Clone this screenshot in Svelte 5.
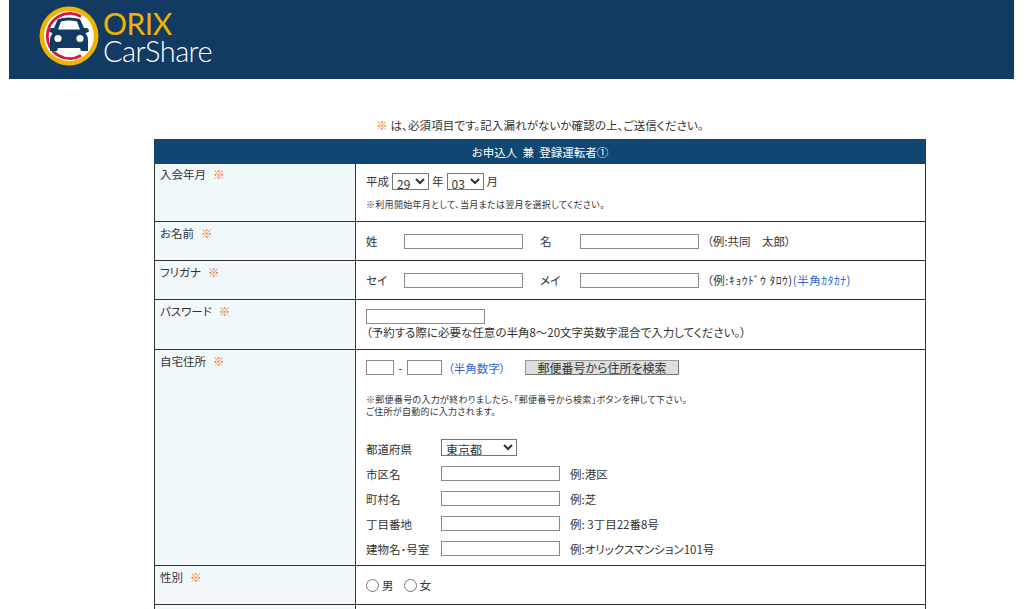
<script>
  const addressRows = [
    { label: '市区名', example: '例:港区' },
    { label: '町村名', example: '例:芝' },
    { label: '丁目番地', example: '例: 3丁目22番8号' },
    { label: '建物名･号室', example: '例:オリックスマンション101号' }
  ];
</script>

<div class="page">
  <header class="masthead">
    <svg class="mark" viewBox="0 0 60 60" width="60" height="60" aria-hidden="true">
      <circle cx="30" cy="30" r="29.5" fill="#f2b300" />
      <circle cx="30" cy="30" r="25" fill="#fff" />
      <path d="M42 10.5 A22.5 22.5 0 1 0 42 49.5" fill="none" stroke="#d8173c" stroke-width="2.8" />
      <path d="M19 13 Q30 10 41 13 L45 22 L48 22 Q50.5 23 49.5 26 L46.5 27 Q49 30 49 35 L49 45 L42 45 L41 42 L19 42 L18 45 L11 45 L11 35 Q11 30 13.5 27 L10.5 26 Q9.5 23 12 22 L15 22 Z" fill="#123a63" />
      <path d="M22 15.5 Q30 13.5 38 15.5 L41 23.5 L19 23.5 Z" fill="#fff" />
      <circle cx="19" cy="32.5" r="3.6" fill="#fff" />
      <circle cx="41" cy="32.5" r="3.6" fill="#fff" />
    </svg>
    <div class="wordmark">
      <span class="orix">ORIX</span>
      <span class="carshare">CarShare</span>
    </div>
  </header>

  <main class="content">
    <p class="notice"><span class="req">※</span> は、必須項目です。記入漏れがないか確認の上、ご送信ください。</p>

    <table class="form">
      <colgroup><col class="c1" /><col class="c2" /></colgroup>
      <thead>
        <tr><th colspan="2">お申込人 &nbsp;兼 &nbsp;登録運転者①</th></tr>
      </thead>
      <tbody>
        <tr class="r-date">
          <td class="key key-top">入会年月<span class="req mark-gap">※</span></td>
          <td class="val val-top">
            <div class="line">
              平成
              <select class="sel"><option>29</option></select>
              年
              <select class="sel"><option>03</option></select>
              月
            </div>
            <p class="small first">※利用開始年月として、当月または翌月を選択してください。</p>
          </td>
        </tr>
        <tr class="r-name">
          <td class="key">お名前<span class="req mark-gap">※</span></td>
          <td class="val mid">
            <div class="names">
              <span class="l1">姓</span><input class="wide" type="text" />
              <span class="l2">名</span><input class="wide" type="text" />
              <span class="hint">（例:共同　太郎）</span>
            </div>
          </td>
        </tr>
        <tr class="r-name">
          <td class="key">フリガナ<span class="req mark-gap">※</span></td>
          <td class="val mid">
            <div class="names">
              <span class="l1">セイ</span><input class="wide" type="text" />
              <span class="l2">メイ</span><input class="wide" type="text" />
              <span class="hint kana">（例:ｷｮｳﾄﾞｳ ﾀﾛｳ)<span class="blue">(半角ｶﾀｶﾅ)</span></span>
            </div>
          </td>
        </tr>
        <tr class="r-pass">
          <td class="key">パスワード<span class="req mark-gap">※</span></td>
          <td class="val">
            <input class="wide block" type="password" />
            <div class="pass-note">（予約する際に必要な任意の半角8～20文字英数字混合で入力してください。）</div>
          </td>
        </tr>
        <tr class="r-addr">
          <td class="key">自宅住所<span class="req mark-gap">※</span></td>
          <td class="val">
            <div class="postal">
              <input class="zip1" type="text" /><span class="dash">-</span><input class="zip2" type="text" />
              <span class="blue zipnote">（半角数字）</span>
              <button class="search" type="button">郵便番号から住所を検索</button>
            </div>
            <p class="small second">※郵便番号の入力が終わりましたら、「郵便番号から検索」ボタンを押して下さい。<br />ご住所が自動的に入力されます。</p>
            <div class="addr">
              <span>都道府県</span>
              <div><select class="sel pref"><option>東京都</option></select></div>
              {#each addressRows as row}
                <span>{row.label}</span>
                <div class="addr-field"><input class="wide" type="text" /><span>{row.example}</span></div>
              {/each}
            </div>
          </td>
        </tr>
        <tr class="r-name">
          <td class="key">性別<span class="req mark-gap">※</span></td>
          <td class="val mid">
            <div class="radios">
              <label><input type="radio" name="sex" />男</label>
              <label><input type="radio" name="sex" />女</label>
            </div>
          </td>
        </tr>
        <tr class="r-name">
          <td class="key"></td>
          <td class="val"></td>
        </tr>
      </tbody>
    </table>
  </main>
</div>

<style>
  :global(html), :global(body) { overflow: hidden; height: 609px; background: #fff; }
  :global(body) {
    margin: 0;
    font-family: "Noto Sans CJK JP", "Liberation Sans", sans-serif;
    font-size: 11.5px;
    color: #333;
    font-feature-settings: "palt";
  }
  .page { width: 1024px; }
  .masthead {
    box-sizing: border-box;
    width: 1005px;
    height: 79px;
    margin-left: 9px;
    background: #123a63;
    display: flex;
    align-items: flex-start;
    padding: 6px 0 0 30px;
    gap: 4px;
  }
  .mark { flex: none; }
  .wordmark { display: flex; flex-direction: column; font-family: Lato, "Open Sans", sans-serif; }
  .orix { color: #f2b300; font-size: 30px; line-height: 28px; margin-top: 3px; font-weight: 400; letter-spacing: -0.5px; }
  .carshare { color: #fff; font-size: 29px; line-height: 28px; font-weight: 300; letter-spacing: -0.55px; }

  .content { width: 772px; margin-left: 154px; }
  .notice { margin: 0; height: 60px; box-sizing: border-box; padding-top: 37px; line-height: 18px; text-align: center; letter-spacing: 0.1px; }
  .req { color: #f26f14; }
  .mark-gap { margin-left: 7px; }

  .form { width: 772px; table-layout: fixed; border-collapse: collapse; line-height: 16px; }
  .c1 { width: 201px; }
  .form th {
    height: 23px;
    padding: 0;
    background: #0f4672;
    color: #fff;
    font-weight: 400;
    border: 1px solid #0f4672;
  }
  .form td { border: 1px solid #333; padding: 0; vertical-align: top; }
  .form tr td { border-top-color: #555; }
  .key { background: #f1f8fc; padding: 3px 0 0 5px !important; }
  .key-top { padding-top: 2px !important; }
  .val { padding: 10px 0 0 10px !important; }
  .val-top { padding-top: 8px !important; }
  .mid { vertical-align: middle !important; padding-top: 0 !important; }
  .r-date { height: 58px; }
  .r-name { height: 39px; }
  .r-pass { height: 50px; }
  .r-addr { height: 216px; }

  .line { display: flex; align-items: center; gap: 3px; height: 18px; white-space: nowrap; }
  .sel {
    height: 17px;
    border: 1px solid #767676;
    border-radius: 0;
    background-color: #fff;
    font: inherit;
    font-size: 12px;
    line-height: 15px;
    color: #333;
    padding: 0;
    width: 37px;
  }
  .pref { width: 76px; }
  .small { margin: 0; font-size: 9px; line-height: 12px; letter-spacing: 0.3px; }
  .first { margin-top: 9px; }
  .second { margin-top: 19px; }

  input[type="text"], input[type="password"] {
    box-sizing: border-box;
    height: 15px;
    border: 1px solid #8a8a8a;
    border-radius: 0;
    padding: 0;
    margin: 0;
    background: #fff;
    display: block;
  }
  .wide { width: 119px; flex: none; }
  .names { display: flex; align-items: center; white-space: nowrap; }
  .l1 { width: 38px; flex: none; }
  .l2 { width: 40px; margin-left: 17px; flex: none; }
  .hint { margin-left: 8px; }
  .kana { letter-spacing: 0.55px; }
  .blue { color: #3366cc; }

  .block { margin-top: -1px !important; }
  .pass-note { line-height: 16px; white-space: nowrap; }

  .postal { display: flex; align-items: center; height: 15px; }
  .zip1 { width: 28px; }
  .zip2 { width: 35px; }
  .dash { width: 13px; text-align: center; }
  .zipnote { margin-left: 6px; width: 77px; flex: none; }
  .search {
    box-sizing: border-box;
    width: 154px;
    height: 15px;
    padding: 0;
    border: 1px solid #999;
    border-bottom-color: #777;
    border-right-color: #777;
    background: #dedede;
    font: inherit;
    font-size: 12px;
    line-height: 13px;
    color: #333;
  }
  .addr {
    display: grid;
    grid-template-columns: 75px 1fr;
    grid-auto-rows: 25px;
    align-items: center;
    margin-top: 18px;
  }
  .addr-field { display: flex; align-items: center; gap: 10px; }
  .radios { display: flex; gap: 10px; }
  .radios label { display: flex; align-items: center; }
  .radios input { margin: 0 3px 0 0; width: 13px; height: 13px; }
</style>
